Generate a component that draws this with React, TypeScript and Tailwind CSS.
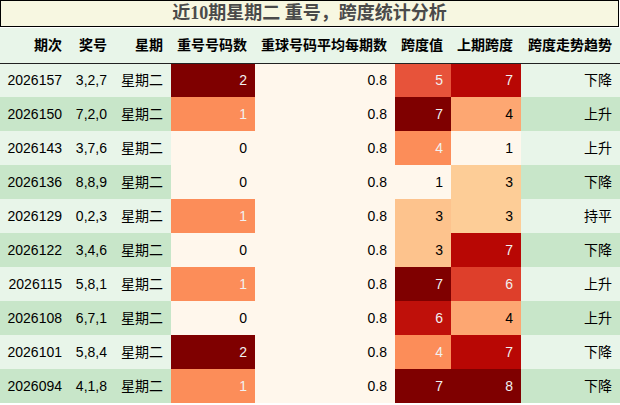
const rows = [
  { qi: "2026157", hao: "3,2,7", chong: 2, kd: 5, sq: 7, trend: "下降" },
  { qi: "2026150", hao: "7,2,0", chong: 1, kd: 7, sq: 4, trend: "上升" },
  { qi: "2026143", hao: "3,7,6", chong: 0, kd: 4, sq: 1, trend: "上升" },
  { qi: "2026136", hao: "8,8,9", chong: 0, kd: 1, sq: 3, trend: "下降" },
  { qi: "2026129", hao: "0,2,3", chong: 1, kd: 3, sq: 3, trend: "持平" },
  { qi: "2026122", hao: "3,4,6", chong: 0, kd: 3, sq: 7, trend: "下降" },
  { qi: "2026115", hao: "5,8,1", chong: 1, kd: 7, sq: 6, trend: "上升" },
  { qi: "2026108", hao: "6,7,1", chong: 0, kd: 6, sq: 4, trend: "上升" },
  { qi: "2026101", hao: "5,8,4", chong: 2, kd: 4, sq: 7, trend: "下降" },
  { qi: "2026094", hao: "4,1,8", chong: 1, kd: 7, sq: 8, trend: "下降" },
];

// OrRd colours, worked out per column (min..max of each column)
const chongColor: Record<number, string> = {
  0: "bg-[#fff7ec] text-black",
  1: "bg-[#fc8d59] text-[#f1f1f1]",
  2: "bg-[#7f0000] text-[#f1f1f1]",
};

const kdColor: Record<number, string> = {
  1: "bg-[#fff7ec] text-black",
  3: "bg-[#fdc38d] text-black",
  4: "bg-[#fc8d59] text-[#f1f1f1]",
  5: "bg-[#e7533a] text-[#f1f1f1]",
  6: "bg-[#bf100a] text-[#f1f1f1]",
  7: "bg-[#7f0000] text-[#f1f1f1]",
};

const sqColor: Record<number, string> = {
  1: "bg-[#fff7ec] text-black",
  3: "bg-[#fdcd97] text-black",
  4: "bg-[#fda772] text-black",
  6: "bg-[#de3f2b] text-[#f1f1f1]",
  7: "bg-[#b80704] text-[#f1f1f1]",
  8: "bg-[#7f0000] text-[#f1f1f1]",
};

const headers = ["期次", "奖号", "星期", "重号号码数", "重球号码平均每期数", "跨度值", "上期跨度", "跨度走势趋势"];
const widths = ["w-[70px]", "w-[45px]", "w-[56px]", "w-[84px]", "w-[140px]", "w-[56px]", "w-[70px]", "w-[99px]"];

export default function App() {
  return (
    <div className="w-[620px] h-[405px] bg-white font-['Liberation_Sans','Noto_Sans_CJK_SC',sans-serif] text-[14px] text-black">
      <div className="w-[619px] h-[27px] border border-black bg-[#f7f7e1] flex items-center justify-center font-['Liberation_Serif','Noto_Sans_CJK_SC',serif] text-[18px] font-bold text-[#4a4a4a]">
        近10期星期二 重号，跨度统计分析
      </div>
      <table className="mt-px w-[620px] table-fixed border-collapse">
        <colgroup>
          {widths.map((w, i) => (
            <col key={i} className={w} />
          ))}
        </colgroup>
        <thead>
          <tr className="h-[35px] bg-[#e8f5e9] border-b border-[#222]">
            {headers.map((h) => (
              <th key={h} className="pr-2 text-right font-bold whitespace-nowrap">
                {h}
              </th>
            ))}
          </tr>
        </thead>
        <tbody>
          {rows.map((r, i) => {
            const rowBg = i % 2 === 0 ? "bg-[#e8f5e9]" : "bg-[#c8e6c9]";
            return (
              <tr key={r.qi} className={`h-[34px] ${rowBg}`}>
                <td className="pr-2 text-right">{r.qi}</td>
                <td className="pr-2 text-right">{r.hao}</td>
                <td className="pr-2 text-right">星期二</td>
                <td className={`pr-2 text-right ${chongColor[r.chong]}`}>{r.chong}</td>
                <td className="pr-2 text-right bg-[#fff7ec]">0.8</td>
                <td className={`pr-2 text-right ${kdColor[r.kd]}`}>{r.kd}</td>
                <td className={`pr-2 text-right ${sqColor[r.sq]}`}>{r.sq}</td>
                <td className="pr-2 text-right">{r.trend}</td>
              </tr>
            );
          })}
        </tbody>
      </table>
    </div>
  );
}
